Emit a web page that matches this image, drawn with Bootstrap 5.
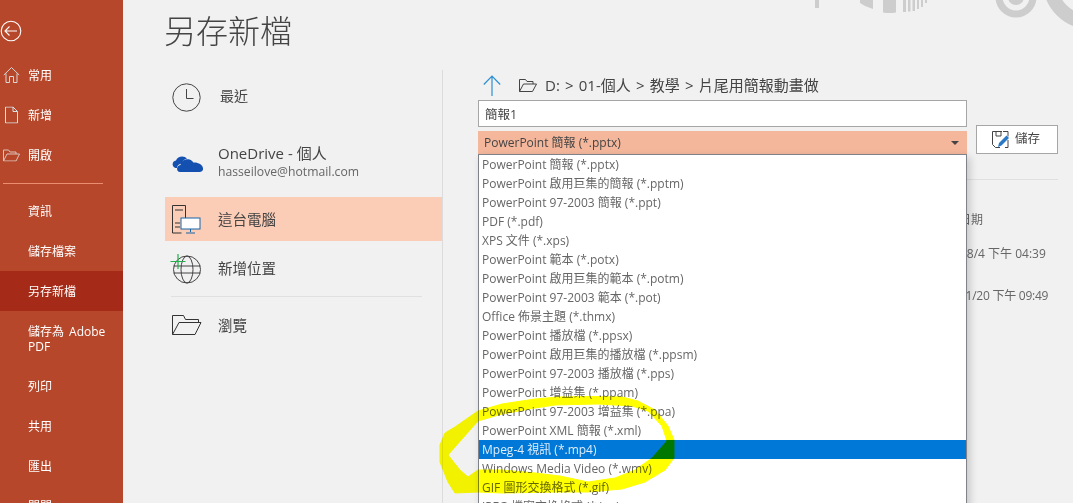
<!DOCTYPE html>
<html lang="zh-Hant">
<head>
<meta charset="utf-8">
<title>另存新檔</title>
<link href="https://cdn.jsdelivr.net/npm/bootstrap@5.3.0/dist/css/bootstrap.min.css" rel="stylesheet">
<style>
html,body{height:503px;overflow:hidden}
body{background:#f1f1f1;font-family:"Open Sans","Noto Sans CJK TC",sans-serif;color:#444;position:relative}
.side{width:123px;flex:none;height:503px;background:#b7472a;overflow:hidden}
.side-back{height:55px;padding:20px 0 0 0;flex:none}
.side-back svg{display:block}
.side .nav-link{color:#fff;font-size:12px;line-height:15px;height:40px;flex:none;padding:0 12px 0 28px;display:flex;align-items:center;position:relative;word-spacing:2px}
.side .nav-link.two{height:55px}
.side .nav-link.active{background:#a52a17}
.side-ico{position:absolute;left:3px;top:50%;transform:translateY(-50%)}
.side-hr{height:1px;flex:none;width:100px;margin:8px 0 7px 3px;background:#ec8d72}
.main{flex:1;min-width:0;display:flex;flex-direction:column}
.head{height:70px;display:flex}
.title{font-size:32px;font-weight:300;line-height:1;margin:15px 0 0 41px;color:#444;white-space:nowrap}
.deco{margin-left:auto;flex:none}
.cols{display:flex;flex:1;min-height:0}
.places{flex:none;padding-left:42px;border-right:1px solid #dcdcdc;box-sizing:content-box;width:277px}
.place{display:flex;align-items:center;color:#444;font-size:14.5px;line-height:19px}
.place-ico{width:53px;flex:none;padding-left:7px;display:flex}
.place-name{font-size:15px}
.place-sub{font-size:12.2px;color:#666;line-height:17px}
.p1{height:54px;margin-bottom:6px}.p1 .place-ico{width:55px}
.p1-text{padding-bottom:3px;font-size:14px}
.p2{height:67px;padding-bottom:4px}
.p3{height:44px;background:#fbccb6}
.p4{height:54px}
.places-hr{height:1px;background:#e0e0e0;margin:1px 20px 0 6px}
.p5{height:56px}
.panel{flex:1;min-width:0;padding:0 15px 0 35px}
.path{height:30px;display:flex;align-items:center;font-size:15px;word-spacing:1.300px;white-space:nowrap;color:#444}
.path-up{margin:0 18px 0 5px;display:flex}
.path-fold{margin-right:8px;display:flex}
.top-form{display:flex;align-items:flex-end}
.fields{width:489px;flex:none;position:relative}
.fname{height:27px;border-radius:0;border:1px solid #a6a6a6;font-size:12.5px;padding:0 6px;color:#444;box-shadow:none;margin-bottom:4px}
.ftype{width:100%;height:23px;background:#f4b79c;border:0;border-radius:0;font-size:12px;color:#444;padding:0 8px 0 6px;display:flex;justify-content:space-between;align-items:center}
.ftype::after{border-top-color:#444;border-left-width:4px;border-right-width:4px;border-top-width:4px;border-bottom:0;margin-right:0}
.type-menu{display:block;position:absolute;left:0;top:100%;width:100%;height:360px;overflow:hidden;margin:0;padding:0;border:1px solid #7f8389;border-radius:0;box-shadow:3px 3px 8px rgba(0,0,0,.18);z-index:2}
.type-menu .dropdown-item{height:19px;line-height:19px;padding:0 3px;font-size:12px;color:#666;white-space:nowrap}
.type-menu .dropdown-item.active{background:#0078d7;color:#dfeefa}
.save{width:82px;height:29px;margin-left:9px;background:#fff;border:1px solid #a6a6a6;border-radius:0;color:#444;font-size:12.5px;padding:0 2px 0 0;display:flex;align-items:center;justify-content:center;gap:6px}
.rule{height:1px;background:#e0e0e0;margin-top:25px}
.date-list{padding-left:457px;font-size:12px;color:#666;white-space:nowrap}
.date-list div{height:42px;line-height:42px}
.date-list div:first-child{height:27px;margin-top:26px;line-height:27px}
.date-list div.date-tight{letter-spacing:-.25px}
.marker{position:absolute;left:0;top:0;mix-blend-mode:multiply;pointer-events:none;z-index:5}
</style>
</head>
<body>
<div class="d-flex">
  <nav class="side nav flex-column flex-nowrap">
    <div class="side-back">
      <svg width="22" height="22" viewBox="0 0 22 22" fill="none" stroke="#fff" stroke-width="1.1"><circle cx="11" cy="11" r="9.8"/><path d="M5 11h12M9.5 6.500 5 11l4.500 4.500"/></svg>
    </div>
    <a class="nav-link" href="#"><svg class="side-ico" width="17" height="17" viewBox="0 0 17 17" fill="none" stroke="#d8d8d8"><path d="M.8 8.500 8.500 1l7.700 7.500M3 7v9h3.500v-6h4v6H14V7"/></svg>常用</a>
    <a class="nav-link" href="#"><svg class="side-ico" style="left:5px" width="13" height="17" viewBox="0 0 13 17" fill="none" stroke="#d8e4e6"><path d="M.5.500h7.500l4.500 4.500v11.500H.5zM8 .5V5h4.500"/></svg>新增</a>
    <a class="nav-link" href="#"><svg class="side-ico" width="17" height="13" viewBox="0 0 17 13" fill="none" stroke="#dcc4bc"><path d="M.5 12.500V1.500h5l1.500 2h6v2M.5 12.500h12.500l3.500-7H4l-3.500 7z"/></svg>開啟</a>
    <div class="side-hr"></div>
    <a class="nav-link" href="#">資訊</a>
    <a class="nav-link" href="#">儲存檔案</a>
    <a class="nav-link active" href="#">另存新檔</a>
    <a class="nav-link two" href="#">儲存為 Adobe PDF</a>
    <a class="nav-link" href="#">列印</a>
    <a class="nav-link" href="#">共用</a>
    <a class="nav-link" href="#">匯出</a>
    <a class="nav-link" href="#">關閉</a>
  </nav>
  <div class="main">
    <header class="head">
      <h1 class="title">另存新檔</h1>
      <svg class="deco" width="273" height="36" viewBox="0 0 273 36" fill="#cdcdcd">
        <rect x="15" y="0" width="4" height="8"/>
        <path d="M60 0h13v9l-8-3-5-3z"/>
        <path d="M83 0h13v12.500q-6.500 1-13 0z"/>
        <path d="M103 0h3v12h-3zM108 0h2.500v11.500H108zM112.500 0h2.500v11H112.500zM117 0h2v9h-2zM121 0h2v7h-2zM125 0h2v3h-2z"/>
        <circle cx="216" cy="-3" r="8"/>
        <circle cx="216" cy="-3" r="17" fill="none" stroke="#cdcdcd" stroke-width="7"/>
        <circle cx="290" cy="-18" r="40" fill="none" stroke="#cdcdcd" stroke-width="14"/>
      </svg>
    </header>
    <div class="cols">
      <div class="places">
        <a class="place p1 text-decoration-none" href="#"><span class="place-ico"><svg width="29" height="29" viewBox="0 0 29 29" fill="none" stroke="#444"><circle cx="14.500" cy="14.500" r="13.700"/><path d="M14.500 6v9.500h7"/></svg></span><span class="p1-text">最近</span></a>
        <a class="place p2 text-decoration-none" href="#"><span class="place-ico"><svg width="31" height="21" viewBox="0 0 31 21" fill="#1450b0"><path d="M2.500 16.500C-.5 14.500.2 10 4 9.500 5.500 5 12 4 15 7.500c-3 1-4.500 2.500-5 5-3 .3-5 2-5 4.500H3.500z"/><path d="M8 21c-4 0-4-6.500.5-7 .5-4 5-6.800 9-5.500 1.800.6 3 1.700 3.800 3 4.500-.5 9.200 2 9.700 5.500.4 2.500-1 4-3.500 4z"/></svg></span><span><span class="d-block place-name">OneDrive - 個人</span><span class="d-block place-sub">hasseilove@hotmail.com</span></span></a>
        <a class="place p3 text-decoration-none" href="#"><span class="place-ico"><svg width="29" height="29" viewBox="0 0 29 29" fill="none"><path d="M.5 28V.5h13v13M.5 28h9" stroke="#333"/><path d="M3 5h8M3 18h5M3 22h5" stroke="#333"/><rect x="9" y="13" width="19" height="11" fill="#fff" stroke="#1464a8"/><path d="M18.500 24v3M14 28h9" stroke="#1464a8"/></svg></span>這台電腦</a>
        <a class="place p4 text-decoration-none" href="#"><span class="place-ico" style="padding-left:0"><svg width="36" height="31" viewBox="0 0 36 31" fill="none"><circle cx="22" cy="16.500" r="13.500" stroke="#444"/><ellipse cx="22" cy="16.500" rx="6" ry="13.500" stroke="#444"/><path d="M8.500 13h27M8.500 20h27" stroke="#444"/><path d="M13 1v15M5.500 8.500h15" stroke="#22b14c" stroke-width="1.200"/></svg></span>新增位置</a>
        <div class="places-hr"></div>
        <a class="place p5 text-decoration-none" href="#"><span class="place-ico"><svg width="30" height="20" viewBox="0 0 30 20" fill="none" stroke="#333"><path d="M.5 19.500V.5h11l2 4h13v3M.5 19.500h22.500l6-12H7z"/></svg></span>瀏覽</a>
      </div>
      <section class="panel">
        <div class="top-form">
          <div class="fields">
            <div class="path">
              <span class="path-up"><svg width="18" height="21" viewBox="0 0 18 21" fill="none" stroke="#2c8fd2" stroke-width="1.200"><path d="M9 21V1M.8 9.500 9 1l8.200 8.500"/></svg></span>
              <span class="path-fold"><svg width="18" height="13" viewBox="0 0 18 13" fill="none" stroke="#444"><path d="M.5 12.500V.5h6l1.500 2h6v2.500M.5 12.500h13l4-7.500H4.500z"/></svg></span>
              D: &gt; 01-個人 &gt; 教學 &gt; 片尾用簡報動畫做
            </div>
            <input class="form-control fname" type="text" value="簡報1" aria-label="檔名">
            <div class="dropdown">
              <button class="btn ftype dropdown-toggle" type="button">PowerPoint 簡報 (*.pptx)</button>
              <div class="dropdown-menu type-menu">
                <a class="dropdown-item" href="#">PowerPoint 簡報 (*.pptx)</a>
                <a class="dropdown-item" href="#">PowerPoint 啟用巨集的簡報 (*.pptm)</a>
                <a class="dropdown-item" href="#">PowerPoint 97-2003 簡報 (*.ppt)</a>
                <a class="dropdown-item" href="#">PDF (*.pdf)</a>
                <a class="dropdown-item" href="#">XPS 文件 (*.xps)</a>
                <a class="dropdown-item" href="#">PowerPoint 範本 (*.potx)</a>
                <a class="dropdown-item" href="#">PowerPoint 啟用巨集的範本 (*.potm)</a>
                <a class="dropdown-item" href="#">PowerPoint 97-2003 範本 (*.pot)</a>
                <a class="dropdown-item" href="#">Office 佈景主題 (*.thmx)</a>
                <a class="dropdown-item" href="#">PowerPoint 播放檔 (*.ppsx)</a>
                <a class="dropdown-item" href="#">PowerPoint 啟用巨集的播放檔 (*.ppsm)</a>
                <a class="dropdown-item" href="#">PowerPoint 97-2003 播放檔 (*.pps)</a>
                <a class="dropdown-item" href="#">PowerPoint 增益集 (*.ppam)</a>
                <a class="dropdown-item" href="#">PowerPoint 97-2003 增益集 (*.ppa)</a>
                <a class="dropdown-item" href="#">PowerPoint XML 簡報 (*.xml)</a>
                <a class="dropdown-item active" href="#">Mpeg-4 視訊 (*.mp4)</a>
                <a class="dropdown-item" href="#">Windows Media Video (*.wmv)</a>
                <a class="dropdown-item" href="#">GIF 圖形交換格式 (*.gif)</a>
                <a class="dropdown-item" href="#">JPEG 檔案交換格式 (*.jpg)</a>
              </div>
            </div>
          </div>
          <button class="btn save" type="button"><svg width="17" height="17" viewBox="0 0 17 17" fill="none"><path d="M10 .5H.5v13l3 3H8M11 .5h5v5M16 9v7.500h-3M4 1v4h5V1" stroke="#444"/><path d="M6 16l1-4 7.500-7.500 2.500 2.500L9.500 14.500z" fill="#2a78c4"/></svg>儲存</button>
        </div>
        <div class="rule"></div>
        <div class="date-list">
          <div>修改日期</div>
          <div>2021/8/4 下午 04:39</div>
          <div class="date-tight">2020/1/20 下午 09:49</div>
        </div>
      </section>
    </div>
  </div>
</div>
<svg class="marker" width="1073" height="503" viewBox="0 0 1073 503" aria-hidden="true">
  <path fill="#ffff00" stroke="#ffff00" stroke-linejoin="round" d="M440 445 445 433 455 427 478 411 502 404 535 399 558 397 590 396.500 622 397 638 401 655 410 668 426 674 440 674 458 665 470 645 482 622 489 588 492 560 492 502 493 478 492 455 493 448 482 440 462ZM448 455 460 470 468 477 478 470 502 470 535 473 560 476 588 482 615 478 635 470 652 458 667 441 662 426 648 411 632 406 598 404 555 405 535 408 502 414 478 421 455 447Z" fill-rule="evenodd"/>
</svg>
</body>
</html>
